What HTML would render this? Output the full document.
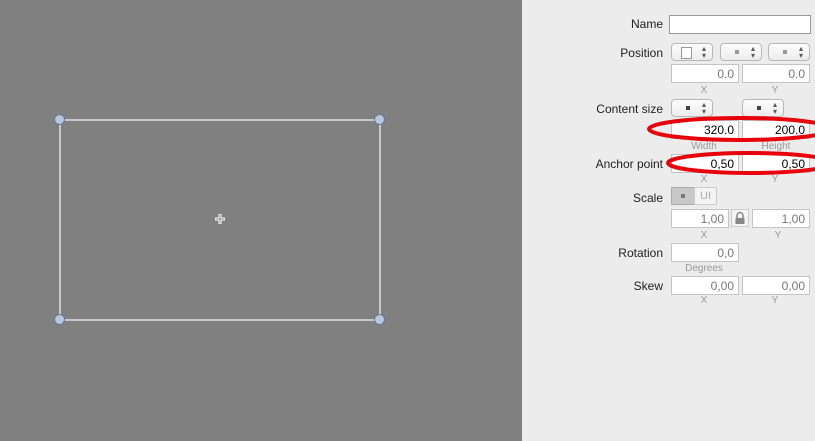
<!DOCTYPE html>
<html><head><style>
body{margin:0;width:815px;height:441px;overflow:hidden;position:relative;font-family:"Liberation Sans",sans-serif;}
#canvas{position:absolute;left:0;top:0;width:522px;height:441px;background:#808080}
#panel{position:absolute;left:522px;top:0;width:293px;height:441px;background:#ececec}
.a{position:absolute}
.lbl{position:absolute;font-size:12px;color:#222;text-align:right;width:140px}
.f{position:absolute;background:#fff;border:1px solid #c4c4c4;box-sizing:border-box;height:19px;font-size:12px;color:#777;text-align:right;padding-right:4px;line-height:18px}
.b{color:#000}
.p{position:absolute;background:linear-gradient(#fdfdfd,#ececec);border:1px solid #b8b8b8;border-radius:4px;box-sizing:border-box;height:18px}
.p .d{position:absolute;left:14px;top:6px;width:4px;height:4px;background:#444}
.p .ar{position:absolute;right:6px;top:1px;font-size:8px;color:#555;line-height:7px}
.sm{position:absolute;font-size:10px;color:#999;text-align:center;width:40px}
.h{position:absolute;width:11px;height:11px;border-radius:50%;background:#b8c6dc;border:1px solid #6a7890;box-sizing:border-box}
</style></head><body>
<div id="canvas">
<div class="a" style="left:59px;top:119px;width:322px;height:202px;border:2px solid #c8c8c8;box-sizing:border-box"></div>
<div class="h" style="left:54px;top:114px"></div><div class="h" style="left:374px;top:114px"></div>
<div class="h" style="left:54px;top:314px"></div><div class="h" style="left:374px;top:314px"></div>
<svg class="a" style="left:214px;top:213px" width="12" height="12"><path d="M6 1V11M1 6H11" stroke="#fff" stroke-width="3"/><path d="M6 1.5V10.5M1.5 6H10.5" stroke="#888" stroke-width="1"/></svg>
</div>
<div id="panel"></div>
<div class="lbl" style="left:523px;top:17px">Name</div>
<div class="f" style="left:669px;top:15px;width:142px;border-color:#999"></div>
<div class="lbl" style="left:523px;top:46px">Position</div>
<div class="p" style="left:671px;top:43px;width:42px"><div class="a" style="left:9px;top:3px;width:9px;height:10px;border:1px solid #999;background:#fff"></div><div class="ar">▴<br>▾</div></div>
<div class="p" style="left:720px;top:43px;width:42px"><div class="d" style="background:#999"></div><div class="ar">▴<br>▾</div></div>
<div class="p" style="left:768px;top:43px;width:42px"><div class="d" style="background:#999"></div><div class="ar">▴<br>▾</div></div>
<div class="f" style="left:671px;top:64px;width:68px">0.0</div>
<div class="f" style="left:742px;top:64px;width:68px">0.0</div>
<div class="sm" style="left:684px;top:85px">X</div><div class="sm" style="left:755px;top:85px">Y</div>
<div class="lbl" style="left:523px;top:102px">Content size</div>
<div class="p" style="left:671px;top:99px;width:42px"><div class="d"></div><div class="ar">▴<br>▾</div></div>
<div class="p" style="left:742px;top:99px;width:42px"><div class="d"></div><div class="ar">▴<br>▾</div></div>
<div class="f b" style="left:671px;top:120px;width:68px">320.0</div>
<div class="f b" style="left:742px;top:120px;width:68px">200.0</div>
<div class="sm" style="left:684px;top:141px">Width</div><div class="sm" style="left:756px;top:141px">Height</div>
<div class="lbl" style="left:523px;top:157px">Anchor point</div>
<div class="f b" style="left:671px;top:154px;width:68px">0,50</div>
<div class="f b" style="left:742px;top:154px;width:68px">0,50</div>
<div class="sm" style="left:684px;top:174px">X</div><div class="sm" style="left:755px;top:174px">Y</div>
<div class="lbl" style="left:523px;top:191px">Scale</div>
<div class="a" style="left:671px;top:187px;width:24px;height:18px;background:#c8c8c8;border:1px solid #aaa;box-sizing:border-box"><div class="a" style="left:9px;top:6px;width:4px;height:4px;background:#777"></div></div>
<div class="a" style="left:694px;top:187px;width:23px;height:18px;background:#f4f4f4;border:1px solid #ccc;box-sizing:border-box;font-size:11px;color:#aaa;text-align:center;line-height:16px">UI</div>
<div class="f" style="left:671px;top:209px;width:58px">1,00</div>
<div class="a" style="left:731px;top:209px;width:18px;height:18px;border:1px solid #ccc;box-sizing:border-box;background:#f4f4f4"><svg width="16" height="16"><path d="M5 8V5.5a3 3 0 0 1 6 0V8" fill="none" stroke="#888" stroke-width="1.5"/><rect x="3.5" y="8" width="9" height="6" fill="#888"/></svg></div>
<div class="f" style="left:752px;top:209px;width:58px">1,00</div>
<div class="sm" style="left:684px;top:230px">X</div><div class="sm" style="left:758px;top:230px">Y</div>
<div class="lbl" style="left:523px;top:246px">Rotation</div>
<div class="f" style="left:671px;top:243px;width:68px">0,0</div>
<div class="sm" style="left:674px;top:263px;width:60px">Degrees</div>
<div class="lbl" style="left:523px;top:279px">Skew</div>
<div class="f" style="left:671px;top:276px;width:68px">0,00</div>
<div class="f" style="left:742px;top:276px;width:68px">0,00</div>
<div class="sm" style="left:684px;top:295px">X</div><div class="sm" style="left:755px;top:295px">Y</div>
<svg class="a" style="left:0;top:0" width="815" height="441"><ellipse cx="740" cy="129" rx="91" ry="11" fill="none" stroke="#e8000a" stroke-width="4"/><ellipse cx="750" cy="163" rx="82" ry="10" fill="none" stroke="#e8000a" stroke-width="4"/></svg>
</body></html>
